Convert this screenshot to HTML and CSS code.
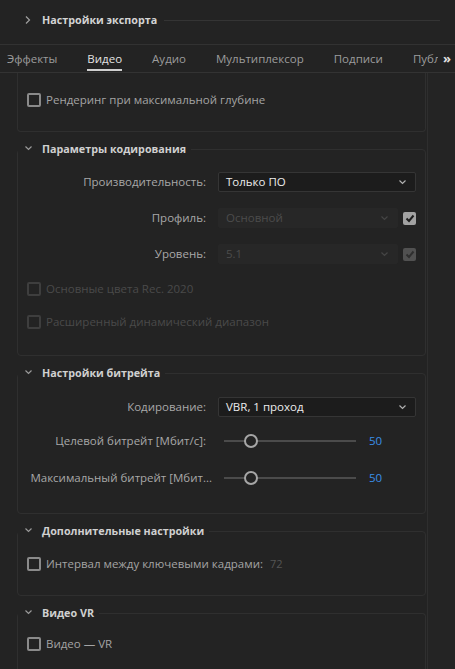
FILE: index.html
```html
<!DOCTYPE html>
<html lang="ru">
<head>
<meta charset="utf-8">
<title>Настройки экспорта</title>
<link rel="stylesheet" href="styles.css">
</head>
<body>
<div class="app">
  <div class="header">
    <svg class="hdr-chev" width="8" height="10" viewBox="0 0 8 10"><polyline points="2,1.5 5.5,5 2,8.5" fill="none" stroke="#a0a0a0" stroke-width="1.2"/></svg>
    <span class="hdr-title">Настройки экспорта</span>
    <span class="hdr-line"></span>
  </div>
  <div class="tabbar">
    <div class="tabs">
      <span class="tab">Эффекты</span>
      <span class="tab active">Видео</span>
      <span class="tab">Аудио</span>
      <span class="tab">Мультиплексор</span>
      <span class="tab">Подписи</span>
      <span class="tab clip">Публикация</span>
    </div>
    <span class="more">»</span>
  </div>
  <div class="main">
    <div class="content">
      <div class="panel-cut">
        <label class="cb-row"><span class="cb"></span><span class="cb-text">Рендеринг при максимальной глубине</span></label>
      </div>

      <fieldset class="group">
        <legend><svg class="lg-chev" width="9" height="6" viewBox="0 0 9 6"><polyline points="1.5,1.5 4.5,4.5 7.5,1.5" fill="none" stroke="#9a9a9a" stroke-width="1.2"/></svg><span class="lg-title">Параметры кодирования</span></legend>
        <div class="rows">
          <div class="frow">
            <span class="flabel">Производительность:</span>
            <div class="select"><span>Только ПО</span><svg class="sel-chev" width="9" height="6" viewBox="0 0 9 6"><polyline points="1.5,1.5 4.5,4.5 7.5,1.5" fill="none" stroke="#b0b0b0" stroke-width="1.2"/></svg></div>
          </div>
          <div class="frow">
            <span class="flabel">Профиль:</span>
            <div class="ctrl-pair">
              <div class="select disabled"><span>Основной</span><svg class="sel-chev" width="9" height="6" viewBox="0 0 9 6"><polyline points="1.5,1.5 4.5,4.5 7.5,1.5" fill="none" stroke="#454545" stroke-width="1.2"/></svg></div>
              <span class="cb checked"><svg width="10" height="9" viewBox="0 0 10 9"><polyline points="1.5,4.5 4,7 8.5,1.5" fill="none" stroke="#1e1e1e" stroke-width="2"/></svg></span>
            </div>
          </div>
          <div class="frow">
            <span class="flabel">Уровень:</span>
            <div class="ctrl-pair">
              <div class="select disabled"><span>5.1</span><svg class="sel-chev" width="9" height="6" viewBox="0 0 9 6"><polyline points="1.5,1.5 4.5,4.5 7.5,1.5" fill="none" stroke="#454545" stroke-width="1.2"/></svg></div>
              <span class="cb checked dim"><svg width="10" height="9" viewBox="0 0 10 9"><polyline points="1.5,4.5 4,7 8.5,1.5" fill="none" stroke="#2f2f2f" stroke-width="2"/></svg></span>
            </div>
          </div>
          <label class="cb-row disabled"><span class="cb"></span><span class="cb-text">Основные цвета Rec. 2020</span></label>
          <label class="cb-row disabled"><span class="cb"></span><span class="cb-text">Расширенный динамический диапазон</span></label>
        </div>
      </fieldset>

      <fieldset class="group">
        <legend><svg class="lg-chev" width="9" height="6" viewBox="0 0 9 6"><polyline points="1.5,1.5 4.5,4.5 7.5,1.5" fill="none" stroke="#9a9a9a" stroke-width="1.2"/></svg><span class="lg-title">Настройки битрейта</span></legend>
        <div class="rows rows-bitrate">
          <div class="frow">
            <span class="flabel">Кодирование:</span>
            <div class="select"><span>VBR, 1 проход</span><svg class="sel-chev" width="9" height="6" viewBox="0 0 9 6"><polyline points="1.5,1.5 4.5,4.5 7.5,1.5" fill="none" stroke="#b0b0b0" stroke-width="1.2"/></svg></div>
          </div>
          <div class="frow">
            <span class="flabel">Целевой битрейт [Мбит/с]:</span>
            <div class="slider"><span class="track"><span class="thumb"></span></span><span class="sval">50</span></div>
          </div>
          <div class="frow frow-max">
            <span class="flabel wide">Максимальный битрейт [Мбит...</span>
            <div class="slider"><span class="track"><span class="thumb"></span></span><span class="sval">50</span></div>
          </div>
        </div>
      </fieldset>

      <fieldset class="group">
        <legend><svg class="lg-chev" width="9" height="6" viewBox="0 0 9 6"><polyline points="1.5,1.5 4.5,4.5 7.5,1.5" fill="none" stroke="#9a9a9a" stroke-width="1.2"/></svg><span class="lg-title">Дополнительные настройки</span></legend>
        <div class="rows rows-extra">
          <label class="cb-row"><span class="cb"></span><span class="cb-text">Интервал между ключевыми кадрами:</span><span class="dimval">72</span></label>
        </div>
      </fieldset>

      <fieldset class="group last">
        <legend><svg class="lg-chev" width="9" height="6" viewBox="0 0 9 6"><polyline points="1.5,1.5 4.5,4.5 7.5,1.5" fill="none" stroke="#9a9a9a" stroke-width="1.2"/></svg><span class="lg-title">Видео VR</span></legend>
        <div class="rows rows-vr">
          <label class="cb-row"><span class="cb"></span><span class="cb-text">Видео — VR</span></label>
        </div>
      </fieldset>
    </div>
    <div class="scrolltrack"></div>
  </div>
</div>
</body>
</html>
```

FILE: styles.css
```css
* { box-sizing: border-box; }
html, body {
  margin: 0;
  padding: 0;
  background: #232323;
}
body {
  width: 455px;
  height: 669px;
  overflow: hidden;
  font-family: "Open Sans", "Noto Sans", sans-serif;
  font-size: 11.5px;
  color: #a6a6a6;
}
.app {
  width: 455px;
  height: 669px;
  display: flex;
  flex-direction: column;
  overflow: hidden;
}

/* Header */
.header {
  height: 45px;
  border-bottom: 1px solid #323232;
  display: flex;
  align-items: flex-start;
  padding: 12px 15px 0 24px;
}
.hdr-chev { margin-top: 3px; flex: none; }
.hdr-title {
  margin-left: 10px;
  font-weight: 700;
  font-size: 10.75px;
  line-height: 16px;
  color: #d4d4d4;
  white-space: nowrap;
}
.hdr-line {
  flex: 1;
  margin-left: 7px;
  margin-top: 8px;
  border-top: 1px solid #343434;
}

/* Tabs */
.tabbar {
  height: 28px;
  border-bottom: 1px solid #333333;
  display: flex;
  align-items: flex-start;
  flex: none;
}
.tabs {
  width: 438px;
  flex: none;
  display: flex;
  gap: 30px;
  padding-left: 7px;
  overflow: hidden;
  white-space: nowrap;
}
.tab {
  height: 26px;
  padding-top: 6px;
  line-height: 16px;
  color: #9c9c9c;
  border-bottom: 2px solid transparent;
  flex: none;
}
.tab.clip {
  flex: 1;
  min-width: 0;
  overflow: hidden;
}
.tab.active {
  color: #e2e2e2;
  border-bottom-color: #cfcfcf;
}
.more {
  padding-top: 5px;
  line-height: 16px;
  font-weight: 700;
  font-size: 13px;
  color: #e0e0e0;
  margin-left: 5px;
}

/* Main */
.main {
  flex: 1;
  display: flex;
  min-height: 0;
}
.content {
  width: 427px;
  padding: 0 1px 0 17px;
  flex: none;
}
.scrolltrack {
  flex: 1;
  border-left: 1px solid #2e2e2e;
  background: #242424;
}

.panel-cut {
  height: 59px;
  border: 1px solid #2f2f2f;
  border-top: none;
  border-radius: 0 0 4px 4px;
  padding: 18px 0 0 9px;
}

/* Groups */
.group {
  margin: 9px 0 0 0;
  padding: 0;
  border: 1px solid #2f2f2f;
  border-radius: 4px;
  min-width: 0;
}
.group legend {
  padding: 0 5px 0 6px;
  margin: 0;
  height: 16px;
  display: flex;
  align-items: center;
}
.lg-chev { flex: none; margin-top: -2px; }
.lg-title {
  margin-left: 9px;
  font-weight: 700;
  font-size: 10.75px;
  line-height: 16px;
  color: #d0d0d0;
  white-space: nowrap;
}
.group.last { border-bottom: none; height: 70px; }

.rows {
  display: flex;
  flex-direction: column;
  gap: 16px;
  padding: 15px 8px 25px 9px;
}
.rows-bitrate { padding-top: 16px; gap: 14px; }
.rows-bitrate .frow-max { margin-top: 3px; }
.rows-extra { padding-top: 16px; padding-bottom: 23px; }
.rows-vr { padding-top: 14px; }

.frow {
  display: grid;
  grid-template-columns: 179px 198px;
  column-gap: 12px;
  align-items: center;
  height: 20px;
}
.flabel {
  text-align: right;
  line-height: 16px;
  white-space: nowrap;
  color: #a8a8a8;
}
.flabel.wide { margin-left: -20px; margin-right: -6px; }

.select {
  height: 20px;
  background: #1c1c1c;
  border: 1px solid #353535;
  border-radius: 2px;
  display: flex;
  align-items: center;
  justify-content: space-between;
  padding: 0 8px 0 7px;
  color: #ececec;
  line-height: 16px;
  white-space: nowrap;
}
.select.disabled {
  background: #272727;
  border-color: #272727;
  color: #4c4c4c;
  width: 180px;
  flex: none;
}
.ctrl-pair {
  display: flex;
  align-items: center;
  gap: 5px;
}

/* Checkboxes */
.cb-row {
  display: flex;
  align-items: center;
  height: 17px;
  gap: 5px;
  line-height: 16px;
  color: #a4a4a4;
}
.cb {
  width: 14px;
  height: 14px;
  border: 2px solid #8a8a8a;
  border-radius: 2px;
  flex: none;
  display: flex;
  align-items: center;
  justify-content: center;
}
.cb.checked {
  width: 13px;
  height: 13px;
  border: none;
  background: #a2a2a2;
}
.cb.checked.dim { background: #515151; }
.cb-row.disabled { color: #4a4a4a; }
.cb-row.disabled .cb { border-color: #3e3e3e; }
.dimval { color: #555555; margin-left: 2px; font-size: 11px; }

/* Sliders */
.slider {
  display: flex;
  align-items: center;
  height: 20px;
}
.track {
  position: relative;
  margin-left: 6px;
  width: 132px;
  height: 2px;
  background: #4b4b4b;
}
.thumb {
  position: absolute;
  left: 20px;
  top: -6px;
  width: 14px;
  height: 14px;
  border: 2px solid #a6a6a6;
  border-radius: 50%;
  background: #232323;
}
.sval {
  margin-left: 13px;
  color: #3a8fe8;
  line-height: 16px;
}
```
